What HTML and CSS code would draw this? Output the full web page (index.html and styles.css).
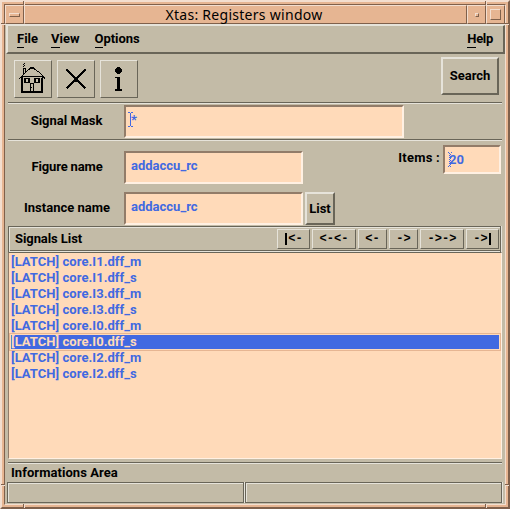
FILE: index.html
```html
<!DOCTYPE html>
<html lang="en">
<head>
<meta charset="utf-8">
<title>Xtas: Registers window</title>
<link rel="stylesheet" href="styles.css">
</head>
<body>
<div class="window">
  <i class="notch v tl"></i><i class="notch v tr"></i><i class="notch v bl"></i><i class="notch v br"></i>
  <i class="notch h lt"></i><i class="notch h rt"></i><i class="notch h lb"></i><i class="notch h rb"></i>
  <header class="titlebar">
    <div class="wm-button"><span class="dash"></span></div>
    <h1 class="wm-title"><span>Xtas: Registers window</span></h1>
    <div class="wm-button"><span class="dot"></span></div>
    <div class="wm-button last"><span class="square"></span></div>
  </header>
  <main class="client">
    <nav class="menubar">
      <span class="m-file"><u>F</u>ile</span>
      <span class="m-view"><u>V</u>iew</span>
      <span class="m-options"><u>O</u>ptions</span>
      <span class="m-help"><u>H</u>elp</span>
    </nav>
    <section class="toolbar">
      <button class="tool"><svg width="36" height="36" viewBox="15 61 36 36" shape-rendering="crispEdges">
        <path d="M24 63h1v1h-1zM23 64h1v1h-1zM24 65h1v1h-1zM23 66h1v1h-1zM23 68h3v1h-3zM23 69h1v5h-1zM25 69h1v4h-1z"/>
        <path d="M30 67h4v1h-4zM29 68h6v1h-6zM28 69h2v1h-2zM34 69h2v1h-2zM27 70h1v1h-1zM36 70h1v1h-1zM26 71h1v1h-1zM37 71h2v1h-2zM25 72h1v1h-1zM39 72h1v1h-1zM24 73h1v1h-1zM40 73h1v1h-1zM23 74h1v1h-1zM41 74h1v1h-1zM22 75h1v1h-1zM42 75h1v1h-1zM21 76h23v1h-23zM20 77h3v1h-3zM42 77h3v1h-3zM19 78h1v1h-1zM44 78h1v1h-1zM21 78h2v14h-2zM41 78h2v14h-2zM21 91h22v2h-22z"/>
        <path d="M24 78h6v1h-6zM24 79h2v4h-2zM28 79h2v4h-2zM24 82h6v1h-6zM34 78h6v1h-6zM34 79h2v4h-2zM38 79h2v4h-2zM34 82h6v1h-6zM30 83h4v1h-4zM30 83h1v9h-1zM33 83h1v9h-1zM31 87h1v1h-1z"/>
      </svg></button>
      <button class="tool"><svg width="36" height="36" viewBox="58 61 36 36" shape-rendering="crispEdges">
        <path d="M66.500 69.500L85.500 88.500M85.500 69.500L66.500 88.500" fill="none" stroke="#000" stroke-width="1.700"/><path d="M74 78h4v3h-4zM75 77h2v5h-2z"/>
      </svg></button>
      <button class="tool"><svg width="36" height="36" viewBox="101 61 36 36" shape-rendering="crispEdges">
        <path d="M117 67h3v1h1v1h1v3h-1v1h-1v1h-3v-1h-1v-1h-1v-3h1v-1h1zM115 77h5v12h2v2h-7v-2h2v-11h-2z"/>
      </svg></button>
      <button class="search raised"><span>Search</span></button>
    </section>
    <section class="mask rule">
      <label><span class="t-mask">Signal Mask</span></label>
      <div class="field"><span>*</span>
        <svg class="caret" width="5" height="15" shape-rendering="crispEdges"><path d="M0 0h2v1h1v-1h2v1h-2v13h2v1h-2v-1h-1v1h-2v-1h2v-13h-2z"/></svg>
      </div>
    </section>
    <section class="names rule">
      <div class="left">
        <div class="name-row"><label><span class="t-figure">Figure name</span></label><div class="field"><span>addaccu_rc</span></div></div>
        <div class="name-row"><label><span class="t-instance">Instance name</span></label><div class="field"><span>addaccu_rc</span></div><button class="list-btn raised"><span>List</span></button></div>
      </div>
      <div class="items"><label><span class="t-items">Items :</span></label>
        <div class="field"><span>20</span>
          <svg class="caret" width="5" height="15" shape-rendering="crispEdges"><path d="M0 0h1v1h-1zM3 0h1v1h-1zM1 1h1v1h-1zM2 2h1v1h-1zM1 3h1v1h-1zM2 4h1v1h-1zM1 5h1v1h-1zM2 6h1v1h-1zM1 7h1v1h-1zM2 8h1v1h-1zM1 9h1v1h-1zM2 10h1v1h-1zM1 11h1v1h-1zM2 12h1v1h-1zM1 13h1v1h-1zM0 14h1v1h-1zM2 14h1v1h-1z"/></svg>
        </div>
      </div>
    </section>
    <section class="list-head">
      <h2><span class="t-signals">Signals List</span></h2>
      <div class="pager">
        <button class="w33"><b class="bar"></b>&lt;-</button><button class="w44">&lt;-&lt;-</button><button class="w29">&lt;-</button><button class="w29">-&gt;</button><button class="w44">-&gt;-&gt;</button><button class="w33">-&gt;<b class="bar"></b></button>
      </div>
    </section>
    <ul class="signals">
      <li><span>[LATCH] core.I1.dff_m</span></li>
      <li><span>[LATCH] core.I1.dff_s</span></li>
      <li><span>[LATCH] core.I3.dff_m</span></li>
      <li><span>[LATCH] core.I3.dff_s</span></li>
      <li><span>[LATCH] core.I0.dff_m</span></li>
      <li class="selected"><span>[LATCH] core.I0.dff_s</span></li>
      <li><span>[LATCH] core.I2.dff_m</span></li>
      <li><span>[LATCH] core.I2.dff_s</span></li>
    </ul>
    <section class="info"><span class="t-info">Informations Area</span></section>
    <footer class="status"><div class="cell first"></div><div class="cell second"></div></footer>
  </main>
</div>
</body>
</html>
```
FILE: styles.css
```css
:root {
  --gray: #c3bba7;
  --light: #e6e3da;
  --dark: #696558;
  --peach: #e6b592;
  --peach-light: #f3decf;
  --peach-dark: #7f604b;
  --field: #ffdab9;
  --field-dark: #927c69;
  --field-light: #fff0e2;
  --blue: #4169e1;
}
* { box-sizing: border-box; }
html, body { margin: 0; width: 510px; height: 509px; overflow: hidden; }
body { font: bold 13px/16px Roboto, sans-serif; color: #000; background: var(--peach); }
button { font: inherit; color: inherit; padding: 0; background: var(--gray); }
h1, h2, ul { margin: 0; padding: 0; font: inherit; }
span { white-space: nowrap; }
.window {
  position: relative; width: 510px; height: 509px;
  border: 2px solid; border-color: var(--peach-light) var(--peach-dark) var(--peach-dark) var(--peach-light);
  padding: 2px 2px 2px 2px; background: var(--peach);
}
.notch { position: absolute; z-index: 1; }
.notch.v { width: 2px; height: 4px; background: linear-gradient(90deg, var(--peach-dark) 50%, var(--peach-light) 50%); }
.notch.h { width: 4px; height: 2px; background: linear-gradient(var(--peach-dark) 50%, var(--peach-light) 50%); }
.tl { left: 21px; top: -1px; }
.tr { left: 483px; top: -1px; }
.bl { left: 21px; bottom: -1px; }
.br { left: 483px; bottom: -1px; }
.lt { left: -1px; top: 21px; }
.rt { right: -1px; top: 21px; }
.lb { left: -1px; top: 482px; }
.rb { right: -1px; top: 482px; }
.titlebar { display: flex; height: 20px; border-top: 1px solid var(--peach-dark); border-left: 1px solid var(--peach-dark); border-right: 1px solid var(--peach-light); }
.wm-button, .wm-title {
  border: 1px solid; border-color: var(--peach-light) var(--peach-dark) var(--peach-dark) var(--peach-light);
  display: flex; align-items: center; justify-content: center;
}
.wm-button { width: 19px; }
.wm-title { flex: 1; font: 14px/16px "Noto Sans", sans-serif; padding-right: 3px; letter-spacing: .28px; }
.dash, .dot, .square { border: 1px solid; border-color: var(--peach-light) var(--peach-dark) var(--peach-dark) var(--peach-light); }
.dash { width: 11px; height: 4px; }
.dot { width: 4px; height: 4px; border-color: var(--peach-light) var(--peach-dark) var(--peach-dark) var(--peach-light); }
.square { width: 11px; height: 11px; }
.client { height: 481px; border: 1px solid; border-color: var(--light) var(--peach-light) var(--peach-light) var(--peach-dark); background: var(--gray); padding-left: 1px; display: flex; flex-direction: column; }
.menubar { height: 29px; flex: none; display: flex; padding: 5px 10px 0 9px; border: solid; border-width: 1px 2px 2px 2px; border-color: var(--light) var(--dark) var(--dark) var(--light); }
.menubar u { text-decoration: none; display: inline-block; height: 17px; border-bottom: 1px solid #000; }
.m-view { margin-left: 13px; }
.m-options { margin-left: 15px; letter-spacing: -.05px; }
.m-help { margin-left: auto; letter-spacing: -.3px; }
.toolbar { display: flex; gap: 5px; height: 48px; padding: 6px 6px 0 8px; }
.tool { width: 38px; height: 38px; border: 1px solid; border-color: var(--light) var(--dark) var(--dark) var(--light); }
.tool svg { display: block; }
.raised { border: 2px solid; border-color: var(--light) var(--dark) var(--dark) var(--light); }
.search { width: 58px; height: 38px; margin: -3px 0 0 auto; }
.rule { margin: 0 3px 0 2px; border-top: 1px solid var(--dark); box-shadow: inset 0 1px var(--light); }
.field {
  position: relative; background: var(--field); color: var(--blue); height: 33px;
  border: 2px solid; border-color: var(--field-dark) var(--field-light) var(--field-light) var(--field-dark);
  padding: 4px 0 0 5px; line-height: 18px;
}
.caret { position: absolute; fill: var(--blue); }
.mask { display: flex; height: 37px; padding-top: 2px; }
.mask label { width: 116px; text-align: center; padding: 8px 0 0 1px; }
.mask .field { width: 280px; }
.mask .caret { left: 2px; top: 5px; }
.names { display: flex; justify-content: space-between; height: 87px; }
.left { padding-top: 11px; display: flex; flex-direction: column; gap: 8px; }
.name-row { display: flex; height: 33px; }
.name-row label { width: 116px; text-align: center; padding: 8px 0 0 2px; }
.name-row .field { width: 179px; }
.t-figure { letter-spacing: -.15px; }
.list-btn { width: 30px; height: 33px; margin-left: 2px; }
.items { display: flex; padding: 5px 1px 0 0; }
.items label { padding: 5px 3px 0 0; letter-spacing: .25px; }
.items .field { width: 58px; height: 29px; padding: 4px 0 0 4px; }
.items .caret { left: 3px; top: 5px; }
.list-head {
  height: 26px; margin: 0 4px 0 2px; display: flex; justify-content: space-between;
  border: 1px solid var(--dark); border-bottom: 0; box-shadow: inset 1px 1px var(--light), inset 0 -1px var(--light), inset 0 -2px var(--dark), 1px 0 var(--light);
}
.list-head h2 { padding: 4px 0 0 6px; letter-spacing: -.08px; }
.pager { display: flex; gap: 2px; padding: 2px 1px 0 0; }
.pager button { height: 20px; border: 1px solid; border-color: var(--light) var(--dark) var(--dark) var(--light); font: bold 12px/14px "Liberation Mono", monospace; display: flex; justify-content: center; align-items: center; }
.w33 { width: 33px; }
.w44 { width: 44px; }
.w29 { width: 29px; }
.bar { width: 2px; height: 12px; background: #000; margin: 0 1px; }
.signals {
  list-style: none; height: 207px; margin: 0 3px 0 2px; padding-top: 1px; background: var(--field); color: var(--blue);
  border: 1px solid; border-color: var(--dark) var(--field-light) var(--field-light) var(--field-dark);
}
.signals li { height: 16px; line-height: 16px; padding-left: 2px; letter-spacing: .05px; }
.signals .selected { margin: 0 2px; padding-left: 0; height: 14px; margin-block: 1px; line-height: 14px; color: var(--field); background: var(--blue); box-shadow: 0 0 0 1px var(--field), 0 0 0 2px var(--peach); }
.info { height: 20px; margin: 3px 3px 0 2px; border-top: 1px solid var(--dark); box-shadow: inset 0 1px var(--light); padding: 2px 0 0 3px; letter-spacing: .06px; }
.status { display: flex; gap: 1px; margin: 0 3px 0 1px; height: 21px; }
.cell { border: 1px solid var(--dark); box-shadow: inset 1px 1px var(--light), 1px 0 var(--light); }
.first { width: 237px; }
.second { width: 257px; }
```
